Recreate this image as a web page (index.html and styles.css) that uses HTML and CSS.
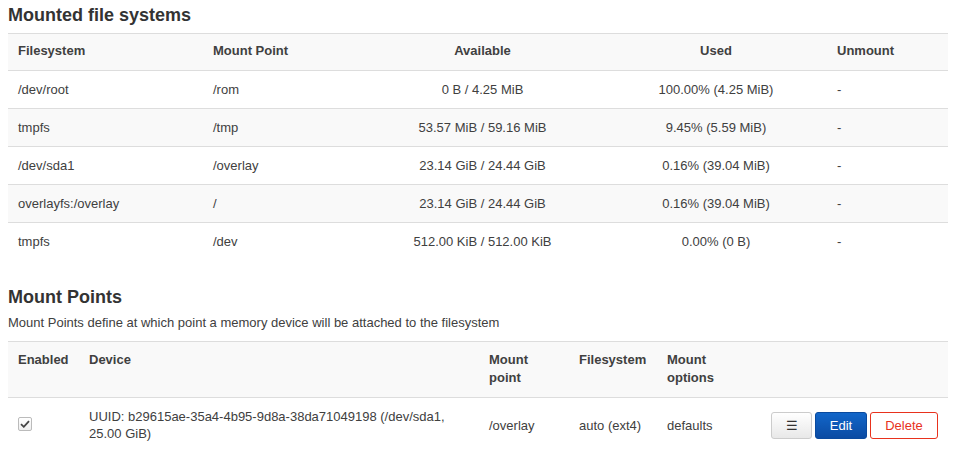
FILE: index.html
```html
<!DOCTYPE html>
<html>
<head>
<meta charset="utf-8">
<link rel="stylesheet" href="styles.css">
</head>
<body>
<div class="page">
  <h3 class="title">Mounted file systems</h3>
  <table class="tbl fs">
    <colgroup>
      <col class="c1"><col class="c2"><col class="c3"><col class="c4"><col class="c5">
    </colgroup>
    <thead>
      <tr><th>Filesystem</th><th>Mount Point</th><th class="ctr">Available</th><th class="ctr">Used</th><th>Unmount</th></tr>
    </thead>
    <tbody>
      <tr><td>/dev/root</td><td>/rom</td><td class="ctr">0 B / 4.25 MiB</td><td class="ctr">100.00% (4.25 MiB)</td><td>-</td></tr>
      <tr><td>tmpfs</td><td>/tmp</td><td class="ctr">53.57 MiB / 59.16 MiB</td><td class="ctr">9.45% (5.59 MiB)</td><td>-</td></tr>
      <tr><td>/dev/sda1</td><td>/overlay</td><td class="ctr">23.14 GiB / 24.44 GiB</td><td class="ctr">0.16% (39.04 MiB)</td><td>-</td></tr>
      <tr><td>overlayfs:/overlay</td><td>/</td><td class="ctr">23.14 GiB / 24.44 GiB</td><td class="ctr">0.16% (39.04 MiB)</td><td>-</td></tr>
      <tr><td>tmpfs</td><td>/dev</td><td class="ctr">512.00 KiB / 512.00 KiB</td><td class="ctr">0.00% (0 B)</td><td>-</td></tr>
    </tbody>
  </table>

  <h3 class="title second">Mount Points</h3>
  <p class="desc">Mount Points define at which point a memory device will be attached to the filesystem</p>
  <table class="tbl mp">
    <colgroup>
      <col class="m1"><col class="m2"><col class="m3"><col class="m4"><col class="m5"><col class="m6">
    </colgroup>
    <thead>
      <tr><th>Enabled</th><th>Device</th><th>Mount point</th><th>Filesystem</th><th>Mount options</th><th></th></tr>
    </thead>
    <tbody>
      <tr>
        <td><span class="chk"><svg width="10" height="8" viewBox="0 0 10 8"><path d="M1 4.2 L3.8 6.8 L9 1.2" fill="none" stroke="#444" stroke-width="1.8"/></svg></span></td>
        <td>UUID: b29615ae-35a4-4b95-9d8a-38da71049198 (/dev/sda1, 25.00 GiB)</td>
        <td>/overlay</td>
        <td>auto (ext4)</td>
        <td>defaults</td>
        <td class="acts">
          <div class="btns">
            <button class="btn menu">&#9776;</button>
            <button class="btn edit">Edit</button>
            <button class="btn del">Delete</button>
          </div>
        </td>
      </tr>
    </tbody>
  </table>
</div>
</body>
</html>
```
FILE: styles.css
```css
html, body { margin: 0; padding: 0; background: #fff; }
body {
  font-family: "Liberation Sans", Arial, sans-serif;
  font-size: 13px;
  color: #404040;
}
.page { padding: 4px 20px 0 8px; }
.title {
  margin: 0;
  font-size: 18px;
  font-weight: bold;
  color: #333;
  line-height: 22px;
}
.second { margin-top: 26px; }
.desc { margin: 6px 0 9px; line-height: 18px; }
.tbl {
  width: 940px;
  border-collapse: collapse;
  table-layout: fixed;
}
.fs { margin-top: 7px; }
.tbl th, .tbl td {
  text-align: left;
  padding: 0 10px;
  border-top: 1px solid #ddd;
  vertical-align: middle;
  line-height: 17px;
}
.tbl th { font-weight: bold; background: #f9f9f9; height: 36px; }
.fs th { padding-bottom: 3px; height: 33px; }
.fs td { height: 37px; }
.fs tbody tr:nth-child(even) td { background: #f9f9f9; }
.ctr { text-align: center !important; }
.c1 { width: 195px; } .c2 { width: 157px; } .c3 { width: 245px; } .c4 { width: 222px; } .c5 { width: 121px; }
.m1 { width: 71px; } .m2 { width: 400px; } .m3 { width: 90px; } .m4 { width: 88px; } .m5 { width: 90px; } .m6 { width: auto; }
.mp th { vertical-align: top; padding-top: 9px; padding-bottom: 10px; height: 56px; box-sizing: border-box; line-height: 18px; }
.mp td { height: 54px; }
.chk {
  display: inline-flex; align-items: center; justify-content: center;
  width: 12px; height: 12px;
  border: 1px solid #bbb; border-radius: 2px;
  background: linear-gradient(#fff, #eee);
  vertical-align: middle;
  margin-top: -4px;
}
.acts { padding-right: 10px; }
.btns { display: flex; justify-content: flex-end; gap: 3px; }
.btn {
  font-family: "Liberation Sans", Arial, sans-serif;
  font-size: 13px;
  height: 27px;
  border-radius: 3px;
  padding: 0 10px;
  cursor: pointer;
}
.menu {
  width: 41px;
  border: 1px solid #ccc;
  background: linear-gradient(#fff, #e8e8e8);
  color: #333;
  font-size: 13px;
}
.edit {
  width: 52px;
  border: 1px solid #0a4a9e;
  background: linear-gradient(#1266c9, #0b4ba3);
  color: #fff;
}
.del {
  width: 68px;
  border: 1px solid #e8321d;
  background: #fff;
  color: #e8321d;
}
```
